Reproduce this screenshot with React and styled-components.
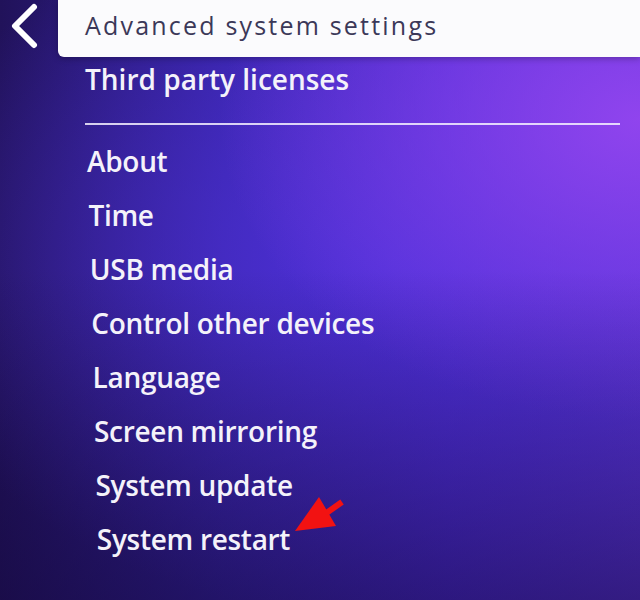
import styled, { createGlobalStyle } from "styled-components";

const GlobalStyle = createGlobalStyle`
  html, body {
    margin: 0;
    padding: 0;
    background: #1d1050;
  }
`;

const items = [
  "About",
  "Time",
  "USB media",
  "Control other devices",
  "Language",
  "Screen mirroring",
  "System update",
  "System restart",
];

const App = () => {
  return (
    <>
      <GlobalStyle />
      <Screen>
        <Header>
          <Back>
            <svg width="30" height="46" viewBox="0 0 30 46">
              <path
                d="M25 4 L6 23 L25 42"
                fill="none"
                stroke="#fff"
                strokeWidth="6"
                strokeLinecap="round"
                strokeLinejoin="round"
              />
            </svg>
          </Back>
          <TitleBar>Advanced system settings</TitleBar>
        </Header>
        <Body>
          <Licenses>Third party licenses</Licenses>
          <Divider />
          <Menu>
            {items.map((label, i) => (
              <Item key={label} $shift={i * 1.4}>
                {label}
                {label === "System restart" && (
                  <Arrow width="52" height="40" viewBox="0 0 52 40">
                    <path d="M47 7 L30 19" stroke="#f21212" strokeWidth="6" strokeLinecap="butt" />
                    <polygon points="0,36 24,2 41,31" fill="#f21212" />
                  </Arrow>
                )}
              </Item>
            ))}
          </Menu>
        </Body>
      </Screen>
    </>
  );
};

const Screen = styled.div`
  position: relative;
  width: 640px;
  height: 600px;
  overflow: hidden;
  font-family: "Open Sans", "Liberation Sans", sans-serif;
  font-weight: 600;
  color: #f4f2fa;
  background:
    radial-gradient(ellipse 420px 300px at 640px 120px, rgba(150, 70, 240, 0.9), rgba(150, 70, 240, 0) 100%),
    radial-gradient(ellipse 520px 360px at 400px 260px, rgba(80, 50, 220, 0.85), rgba(80, 50, 220, 0) 100%),
    linear-gradient(90deg, #21125a 0%, #3422a0 35%, #4a2ad0 70%, #5a34d8 100%);
  &::after {
    content: "";
    position: absolute;
    inset: 0;
    pointer-events: none;
    background: linear-gradient(180deg, rgba(20, 8, 60, 0) 45%, rgba(20, 8, 60, 0.55) 100%);
  }
`;

const Header = styled.div`
  display: flex;
  height: 57px;
`;

const Back = styled.div`
  width: 58px;
  display: flex;
  align-items: flex-start;
  padding: 3px 0 0 9px;
  box-sizing: border-box;
`;

const TitleBar = styled.div`
  flex: 1;
  background: #fbfbfd;
  border-bottom-left-radius: 6px;
  box-shadow: 0 2px 6px rgba(0, 0, 0, 0.25);
  color: #3b3858;
  font-size: 25px;
  font-weight: 500;
  letter-spacing: 2.2px;
  display: flex;
  align-items: center;
  padding: 0 0 8px 27px;
  box-sizing: border-box;
`;

const Body = styled.div`
  position: relative;
  z-index: 1;
  padding-left: 85px;
  padding-right: 20px;
`;

const Licenses = styled.div`
  font-size: 28px;
  line-height: 44px;
`;

const Divider = styled.div`
  height: 2px;
  background: rgba(245, 240, 255, 0.85);
  margin-top: 22px;
`;

const Menu = styled.div`
  display: flex;
  flex-direction: column;
  padding-top: 9px;
`;

const Item = styled.div`
  position: relative;
  font-size: 28px;
  line-height: 54px;
  letter-spacing: -0.3px;
  padding-left: ${(p) => p.$shift + 2}px;
  width: fit-content;
`;

const Arrow = styled.svg`
  position: absolute;
  left: 100%;
  top: -17px;
  margin-left: 5px;
`;

export default App;
